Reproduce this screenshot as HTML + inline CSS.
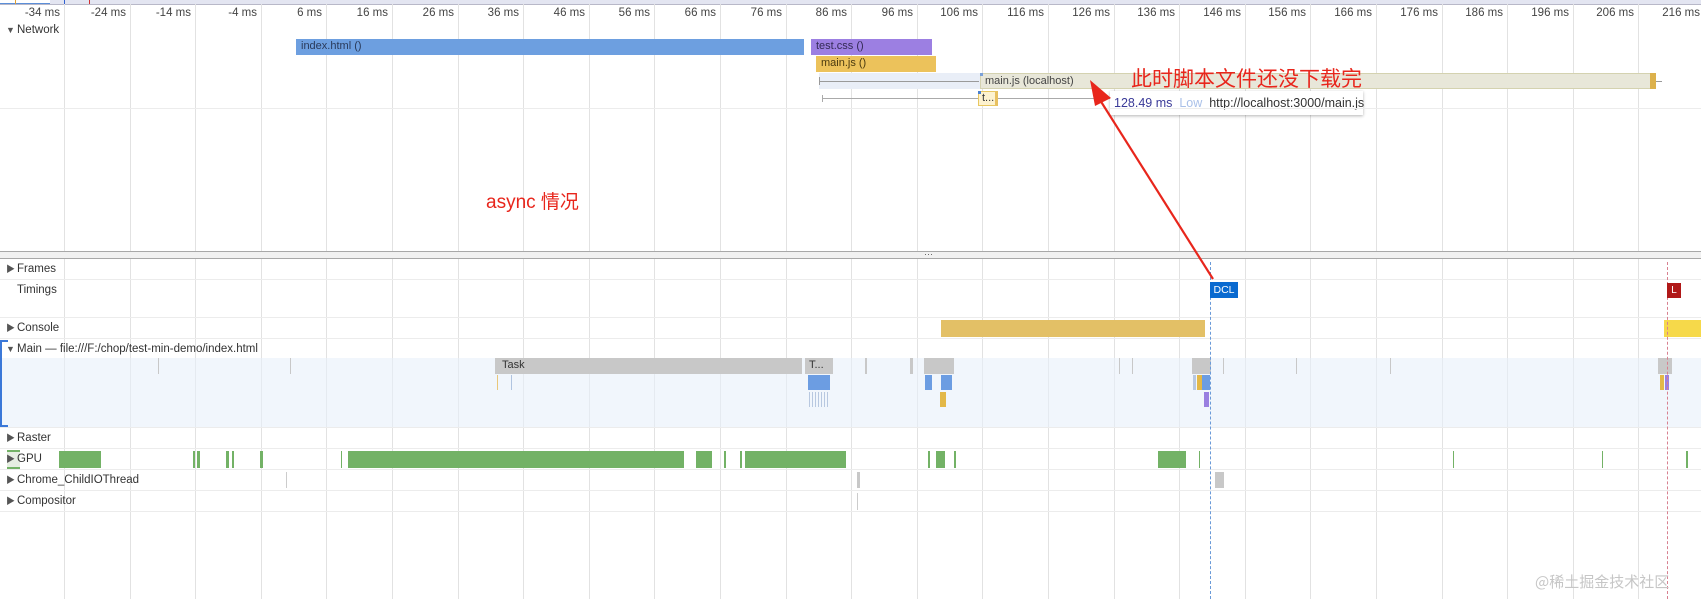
<!DOCTYPE html>
<html><head><meta charset="utf-8"><style>
body{margin:0;width:1701px;height:599px;overflow:hidden;background:#fff;font-family:"Liberation Sans","Noto Sans CJK SC",sans-serif;position:relative}
div{position:absolute;box-sizing:border-box}
.g{top:4px;bottom:0;width:1px;background:#e2e2e2}
.lb{top:7px;width:66px;text-align:right;font-size:11.5px;color:#444}
.hl{left:0;right:0;height:1px;background:#ececec}
.t{left:17px;font-size:11.5px;color:#333;line-height:14px}
.tri{left:6px;font-size:9px;color:#555;line-height:14px}
.gp{top:451px;height:17px;background:#73b266}
.gr{background:#c8c8c8}
</style></head><body>
<div style="left:0;top:0;width:1701px;height:5px;background:#e3e5f1;border-bottom:1px solid #b8b8c8"></div>
<div style="left:0;top:0;width:50px;height:4px;background:#fff;border-bottom:1px solid #5b8ed8"></div>
<div style="left:15px;top:0;width:1px;height:4px;background:#e0a030"></div>
<div style="left:64px;top:0;width:1px;height:4px;background:#3060d0"></div>
<div style="left:89px;top:0;width:1px;height:4px;background:#d03030"></div>

<div class="g" style="left:64px"></div><div class="g" style="left:130px"></div><div class="g" style="left:195px"></div><div class="g" style="left:261px"></div><div class="g" style="left:326px"></div><div class="g" style="left:392px"></div><div class="g" style="left:458px"></div><div class="g" style="left:523px"></div><div class="g" style="left:589px"></div><div class="g" style="left:654px"></div><div class="g" style="left:720px"></div><div class="g" style="left:786px"></div><div class="g" style="left:851px"></div><div class="g" style="left:917px"></div><div class="g" style="left:982px"></div><div class="g" style="left:1048px"></div><div class="g" style="left:1114px"></div><div class="g" style="left:1179px"></div><div class="g" style="left:1245px"></div><div class="g" style="left:1310px"></div><div class="g" style="left:1376px"></div><div class="g" style="left:1442px"></div><div class="g" style="left:1507px"></div><div class="g" style="left:1573px"></div><div class="g" style="left:1638px"></div>

<div class="lb" style="left:-6px">-34 ms</div><div class="lb" style="left:60px">-24 ms</div><div class="lb" style="left:125px">-14 ms</div><div class="lb" style="left:191px">-4 ms</div><div class="lb" style="left:256px">6 ms</div><div class="lb" style="left:322px">16 ms</div><div class="lb" style="left:388px">26 ms</div><div class="lb" style="left:453px">36 ms</div><div class="lb" style="left:519px">46 ms</div><div class="lb" style="left:584px">56 ms</div><div class="lb" style="left:650px">66 ms</div><div class="lb" style="left:716px">76 ms</div><div class="lb" style="left:781px">86 ms</div><div class="lb" style="left:847px">96 ms</div><div class="lb" style="left:912px">106 ms</div><div class="lb" style="left:978px">116 ms</div><div class="lb" style="left:1044px">126 ms</div><div class="lb" style="left:1109px">136 ms</div><div class="lb" style="left:1175px">146 ms</div><div class="lb" style="left:1240px">156 ms</div><div class="lb" style="left:1306px">166 ms</div><div class="lb" style="left:1372px">176 ms</div><div class="lb" style="left:1437px">186 ms</div><div class="lb" style="left:1503px">196 ms</div><div class="lb" style="left:1568px">206 ms</div><div class="lb" style="left:1634px">216 ms</div>

<div class="tri" style="top:23px">▼</div><div class="t" style="top:23px">Network</div>
<div style="left:296px;top:39px;width:508px;height:16px;background:#6d9fe0;font-size:11px;color:#2a3a5a;padding:1px 5px">index.html ()</div>
<div style="left:811px;top:39px;width:121px;height:16px;background:#9c7fe2;font-size:11px;color:#332a55;padding:1px 5px">test.css ()</div>
<div style="left:816px;top:56px;width:120px;height:16px;background:#ecc25b;font-size:11px;color:#4a3a10;padding:1px 5px">main.js ()</div>
<div style="left:819px;top:73px;width:161px;height:16px;background:#e9eef7"></div>
<div style="left:819px;top:81px;width:160px;height:1px;background:#9a9a9a"></div>
<div style="left:819px;top:77px;width:1px;height:8px;background:#9a9a9a"></div>
<div style="left:980px;top:73px;width:676px;height:16px;background:#e8e7d9;border:1px solid #d4d2b0;font-size:11px;color:#444;padding:1px 4px">main.js (localhost)</div>
<div style="left:980px;top:73px;width:3px;height:3px;background:#7aa0d8"></div>
<div style="left:1650px;top:73px;width:6px;height:16px;background:#dcb14c"></div>
<div style="left:1656px;top:81px;width:6px;height:1px;background:#999"></div>
<div style="left:822px;top:98px;width:158px;height:1px;background:#aaa"></div>
<div style="left:822px;top:95px;width:1px;height:7px;background:#aaa"></div>
<div style="left:978px;top:91px;width:20px;height:15px;background:#fdf2cf;border:1px solid #e8c760;border-right:3px solid #e8c060;font-size:11px;color:#333;padding:0 3px;line-height:12px">t...</div>
<div style="left:978px;top:91px;width:3px;height:3px;background:#4a80d0"></div>
<div style="left:998px;top:98px;width:112px;height:1px;background:#aaa"></div>
<div style="left:1110px;top:91px;width:253px;height:24px;background:#fff;box-shadow:0 1px 3px rgba(0,0,0,.3);font-size:12.5px;line-height:24px;padding-left:4px;white-space:nowrap"><span style="color:#3a3a98">128.49 ms</span> <span style="color:#a9c0e8">&nbsp;Low&nbsp;</span> <span style="color:#333">http://localhost:3000/main.js</span></div>
<div class="hl" style="top:108px"></div>

<div style="left:1131px;top:64px;font-size:21px;color:#e8261c;white-space:nowrap;font-family:'Noto Sans CJK SC',sans-serif;line-height:28px">此时脚本文件还没下载完</div>
<div style="left:486px;top:190px;font-size:19px;color:#e8261c;white-space:nowrap;line-height:26px">async 情况</div>

<div style="left:0;top:251px;width:1701px;height:8px;background:#f1f1f1;border-top:1px solid #a8a8a8;border-bottom:1px solid #a8a8a8"></div>
<div style="left:924px;top:250px;font-size:9px;color:#555;line-height:8px">···</div>

<div class="tri" style="top:262px">▶</div><div class="t" style="top:262px">Frames</div>
<div class="hl" style="top:279px"></div>
<div class="t" style="top:283px">Timings</div>
<div class="hl" style="top:317px"></div>
<div class="tri" style="top:321px">▶</div><div class="t" style="top:321px">Console</div>
<div class="hl" style="top:338px"></div>
<div class="tri" style="top:342px">▼</div><div class="t" style="top:342px">Main — file:///F:/chop/test-min-demo/index.html</div>
<div style="left:0;top:358px;width:1701px;height:69px;background:rgba(232,240,250,.6)"></div>
<div style="left:0;top:340px;width:8px;height:87px;border:2px solid #3b78d8;border-right:none"></div>
<div class="hl" style="top:427px"></div>
<div class="tri" style="top:431px">▶</div><div class="t" style="top:431px">Raster</div>
<div class="hl" style="top:448px"></div>
<div style="left:7px;top:450px;width:13px;height:19px;background:#e6eee2;border-top:2px solid #73b266;border-bottom:2px solid #73b266"></div>
<div class="tri" style="top:452px">▶</div><div class="t" style="top:452px">GPU</div>
<div class="hl" style="top:469px"></div>
<div class="tri" style="top:473px">▶</div><div class="t" style="top:473px">Chrome_ChildIOThread</div>
<div class="hl" style="top:490px"></div>
<div class="tri" style="top:494px">▶</div><div class="t" style="top:494px">Compositor</div>
<div class="hl" style="top:511px"></div>

<!-- console -->
<div style="left:941px;top:320px;width:264px;height:17px;background:#e3c066"></div>
<div style="left:1664px;top:320px;width:37px;height:17px;background:#f6d94a"></div>

<!-- main tasks -->
<div class="gr" style="left:158px;top:358px;width:1px;height:16px"></div>
<div class="gr" style="left:290px;top:358px;width:1px;height:16px"></div>
<div class="gr" style="left:495px;top:358px;width:307px;height:16px;font-size:11px;color:#333;padding:1px 7px">Task</div>
<div class="gr" style="left:805px;top:358px;width:28px;height:16px;font-size:11px;color:#333;padding:1px 4px">T...</div>
<div style="left:808px;top:375px;width:22px;height:15px;background:#6c9de2"></div>
<div style="left:809px;top:392px;width:20px;height:15px;background:repeating-linear-gradient(90deg,#b8c8e0 0 1px,transparent 1px 3px)"></div>
<div style="left:497px;top:375px;width:1px;height:15px;background:#e9c77a"></div>
<div style="left:511px;top:375px;width:1px;height:15px;background:#b0c4e0"></div>
<div class="gr" style="left:865px;top:358px;width:2px;height:16px"></div>
<div class="gr" style="left:910px;top:358px;width:3px;height:16px"></div>
<div class="gr" style="left:924px;top:358px;width:30px;height:16px"></div>
<div style="left:925px;top:375px;width:7px;height:15px;background:#6c9de2"></div>
<div style="left:941px;top:375px;width:11px;height:15px;background:#6c9de2"></div>
<div style="left:940px;top:392px;width:6px;height:15px;background:#e3b848"></div>
<div class="gr" style="left:1119px;top:358px;width:1px;height:16px"></div>
<div class="gr" style="left:1132px;top:358px;width:1px;height:16px"></div>
<div class="gr" style="left:1192px;top:358px;width:19px;height:16px"></div>
<div style="left:1193px;top:375px;width:3px;height:15px;background:#b8c8e0"></div>
<div style="left:1197px;top:375px;width:5px;height:15px;background:#e3b848"></div>
<div style="left:1202px;top:375px;width:8px;height:15px;background:#6c9de2"></div>
<div style="left:1204px;top:392px;width:5px;height:15px;background:#9a7fe0"></div>
<div class="gr" style="left:1223px;top:358px;width:1px;height:16px"></div>
<div class="gr" style="left:1296px;top:358px;width:1px;height:16px"></div>
<div class="gr" style="left:1390px;top:358px;width:1px;height:16px"></div>
<div class="gr" style="left:1658px;top:358px;width:14px;height:16px"></div>
<div style="left:1660px;top:375px;width:4px;height:15px;background:#e3b848"></div>
<div style="left:1665px;top:375px;width:4px;height:15px;background:#9a7fe0"></div>

<!-- GPU -->
<div class="gp" style="left:59px;width:42px"></div><div class="gp" style="left:193px;width:2px"></div><div class="gp" style="left:197px;width:3px"></div><div class="gp" style="left:226px;width:3px"></div><div class="gp" style="left:232px;width:2px"></div><div class="gp" style="left:260px;width:3px"></div><div class="gp" style="left:341px;width:1px"></div><div class="gp" style="left:348px;width:336px"></div><div class="gp" style="left:696px;width:16px"></div><div class="gp" style="left:724px;width:2px"></div><div class="gp" style="left:740px;width:2px"></div><div class="gp" style="left:745px;width:101px"></div><div class="gp" style="left:928px;width:2px"></div><div class="gp" style="left:936px;width:9px"></div><div class="gp" style="left:954px;width:2px"></div><div class="gp" style="left:1158px;width:28px"></div><div class="gp" style="left:1199px;width:1px"></div><div class="gp" style="left:1453px;width:1px"></div><div class="gp" style="left:1602px;width:1px"></div><div class="gp" style="left:1686px;width:2px"></div>
<!-- IO / compositor -->
<div style="left:286px;top:472px;width:1px;height:16px;background:#ccc"></div>
<div style="left:857px;top:472px;width:3px;height:16px;background:#c8c8c8"></div>
<div style="left:1215px;top:472px;width:9px;height:16px;background:#c8c8c8"></div>
<div style="left:857px;top:493px;width:1px;height:17px;background:#ccc"></div>

<!-- markers -->
<div style="left:1210px;top:262px;width:0;height:337px;border-left:1px dashed #6a9ad8"></div>
<div style="left:1210px;top:282px;width:28px;height:16px;background:#0a6ad0;color:#fff;font-size:10.5px;line-height:16px;text-align:center">DCL</div>
<div style="left:1667px;top:262px;width:0;height:337px;border-left:1px dashed #d88090"></div>
<div style="left:1667px;top:283px;width:14px;height:15px;background:#b01818;color:#fff;font-size:10px;line-height:15px;text-align:center">L</div>

<svg style="position:absolute;left:0;top:0" width="1701" height="599">
<line x1="1213" y1="279" x2="1100" y2="100" stroke="#e8261c" stroke-width="2.2"/>
<polygon points="1090,80 1111,98 1095,106" fill="#e8261c"/>
</svg>

<div style="left:1535px;top:572px;font-size:15px;color:#c6c6c6;white-space:nowrap;font-family:'Noto Sans CJK SC',sans-serif;line-height:20px">@稀土掘金技术社区</div>
</body></html>
